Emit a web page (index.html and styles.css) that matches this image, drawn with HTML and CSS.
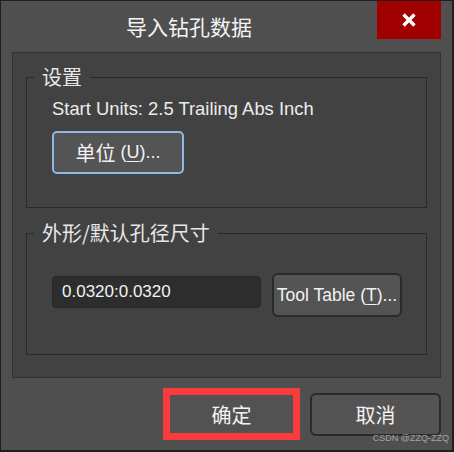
FILE: index.html
```html
<!DOCTYPE html>
<html lang="zh-CN">
<head>
<meta charset="utf-8">
<title>导入钻孔数据</title>
<link rel="stylesheet" href="styles.css">
</head>
<body>
<div class="window">
  <div class="titlebar">
    <div class="title">导入钻孔数据</div>
    <div class="close">
      <svg width="14" height="14" viewBox="0 0 14 14"><path d="M1.5 1.5 L12.5 12.5 M12.5 1.5 L1.5 12.5" stroke="#fff" stroke-width="3.4" stroke-linecap="butt"/></svg>
    </div>
  </div>
  <div class="panel">
    <div class="group group-settings">
      <span class="legend">设置</span>
      <div class="info">Start Units: 2.5 Trailing Abs Inch</div>
      <button class="btn btn-units">单位<span class="latin">&nbsp;(<u>U</u>)...</span></button>
    </div>
    <div class="group group-size">
      <span class="legend">外形/默认孔径尺寸</span>
      <div class="row">
        <div class="input">0.0320:0.0320</div>
        <button class="btn btn-tool"><span class="latin">Tool Table (<u>T</u>)...</span></button>
      </div>
    </div>
  </div>
  <div class="footer">
    <button class="btn btn-ok">确定</button>
    <button class="btn btn-cancel">取消</button>
  </div>
  <div class="watermark">CSDN @ZZQ-ZZQ</div>
</div>
</body>
</html>
```
FILE: styles.css
```css
* { box-sizing: border-box; }
html, body { margin: 0; padding: 0; background: #1f1f1f; }
body { font-family: "Noto Sans CJK SC", "Noto Sans", sans-serif; color: #f2f2f2; }

.window {
  position: relative;
  width: 454px;
  height: 452px;
  background: #4f4f4f;
  border-style: solid;
  border-color: #1f1f1f;
  border-width: 1px 2px 2px 1px;
  display: flex;
  flex-direction: column;
}

.titlebar {
  height: 51px;
  display: flex;
  align-items: flex-start;
}
.title {
  flex: 1;
  text-align: center;
  font-size: 21px;
  line-height: 24px;
  margin-top: 13px;
  color: #f4f4f4;
}
.close {
  width: 64px;
  height: 38px;
  margin-right: 11px;
  background: #a00000;
  display: flex;
  align-items: center;
  justify-content: center;
}

.panel {
  height: 326px;
  margin: 0 11px;
  background: #424242;
  border: 1px solid #323232;
  padding: 24px 13px 0 13px;
  display: flex;
  flex-direction: column;
  gap: 25px;
}

.group {
  position: relative;
  width: 401px;
  border: 1px solid #2a2a2a;
  padding-left: 25px;
}
.legend {
  position: absolute;
  top: -14px;
  left: 7px;
  padding: 0 8px;
  background: #424242;
  font-size: 20px;
  line-height: 26px;
  color: #e8e8e8;
}

.group-settings {
  height: 131px;
  padding-top: 19px;
}
.info {
  font-family: "Liberation Sans", "Noto Sans CJK SC", sans-serif;
  font-size: 18.4px;
  line-height: 24px;
  color: #ececec;
}

.btn {
  font-family: "Noto Sans CJK SC", "Noto Sans", sans-serif;
  font-size: 20px;
  color: #f2f2f2;
  background: #545454;
  border: 1px solid #2b2b2b;
  border-radius: 5px;
  padding: 0;
  display: flex;
  align-items: center;
  justify-content: center;
  white-space: nowrap;
}
.btn u { text-underline-offset: 3px; text-decoration-thickness: 1px; }
.latin { font-family: "Liberation Sans", "Noto Sans CJK SC", sans-serif; font-size: 18px; }

.btn-units {
  width: 132px;
  height: 43px;
  margin-top: 10px;
  border: 2px solid #8fb8e6;
  border-radius: 5px;
}

.group-size {
  height: 122px;
  padding-top: 39px;
}
.row {
  display: flex;
  align-items: flex-start;
  gap: 11px;
}
.input {
  width: 209px;
  height: 32px;
  margin-top: 3px;
  background: #2d2d2d;
  border: 1px solid #272727;
  border-radius: 4px;
  padding-left: 9px;
  font-family: "Liberation Sans", "Noto Sans CJK SC", sans-serif;
  font-size: 17px;
  line-height: 30px;
  color: #f2f2f2;
}
.btn-tool {
  width: 130px;
  height: 44px;
  border: 2px solid #2b2b2b;
  border-radius: 6px;
}
.btn-tool .latin { font-size: 17.5px; }

.footer {
  flex: 1;
  display: flex;
  justify-content: flex-end;
  align-items: center;
  gap: 10px;
  padding: 0 11px 0 0;
}
.btn-ok {
  width: 137px;
  height: 52px;
  border: 7px solid #f83b3b;
  border-radius: 0;
  background: #525252;
}
.btn-cancel {
  width: 131px;
  height: 43px;
  border: 2px solid #2a2a2a;
  border-radius: 6px;
}

.watermark {
  position: absolute;
  right: 3px;
  bottom: 6px;
  font-family: "Liberation Sans", Arial, sans-serif;
  font-size: 9px;
  line-height: 11px;
  color: #b4b4b4;
  opacity: 0.85;
}
```
